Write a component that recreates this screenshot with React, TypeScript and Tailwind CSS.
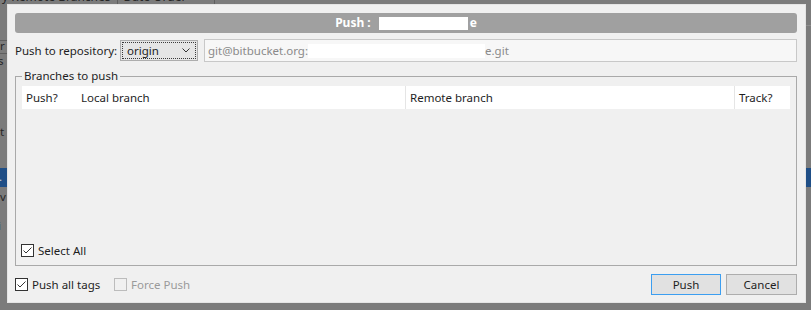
import React from "react";

function Check({ checked, disabled }: { checked?: boolean; disabled?: boolean }) {
  return (
    <div
      className={
        "w-[13px] h-[13px] shrink-0 border flex items-center justify-center " +
        (disabled ? "border-[#bcbcbc] bg-[#f0f0f0]" : "border-[#333333] bg-white")
      }
    >
      {checked && (
        <svg width="11" height="11" viewBox="0 0 11 11">
          <polyline points="1.5,5.5 4,8 9.5,2.5" fill="none" stroke="#333333" strokeWidth="1" />
        </svg>
      )}
    </div>
  );
}

export default function App() {
  return (
    <div className="relative w-[811px] h-[310px] overflow-hidden bg-[#7b7b7b] font-['Noto_Sans','Segoe_UI',sans-serif] text-[11.5px] text-[#1e1e1e]">
      {/* dimmed application behind the dialog */}
      <div className="absolute left-0 top-[-10px] flex items-center h-[14px] text-[#262626] leading-[14px] text-[12px]">
        <span className="pl-[2px] pr-[6px] whitespace-nowrap">y Remote Branches</span>
        <span className="w-[1px] h-[14px] bg-[#5e5e5e]" />
        <span className="pl-[6px] whitespace-nowrap">Date Order</span>
        <svg width="12" height="8" viewBox="0 0 12 8" className="ml-[8px]">
          <polyline points="2,1 6,5 10,1" fill="none" stroke="#262626" strokeWidth="1" />
        </svg>
        <span className="ml-[8px] w-[1px] h-[14px] bg-[#5e5e5e]" />
      </div>
      <div className="absolute left-0 top-[40px] w-[7px] h-[1px] bg-[#5e5e5e]" />
      <div className="absolute left-0 top-[40px] text-[#262626] leading-[12px]">r</div>
      <div className="absolute left-0 top-[53px] w-[7px] h-[1px] bg-[#5e5e5e]" />
      <div className="absolute left-[-2px] top-[55px] text-[#262626] leading-[12px]">s</div>
      <div className="absolute left-0 top-[126px] text-[#262626] leading-[12px]">t</div>
      <div className="absolute left-0 top-[168px] w-[811px] h-[19px] bg-[#1f4e86]" />
      <div className="absolute left-[-1px] top-[171px] text-[#d0d0d0] leading-[12px]">.</div>
      <div className="absolute left-0 top-[191px] text-[#262626] leading-[12px]">v</div>
      <div className="absolute left-[-2px] top-[220px] text-[#262626] leading-[12px]">i</div>
      <div className="absolute right-0 top-[25px] w-[5px] h-[1px] bg-[#8e8e8e]" />

      {/* dialog */}
      <div className="absolute left-[7px] top-[4px] w-[799px] h-[299px] bg-[#f0f0f0] border border-[#e4e4e4] flex flex-col pl-[7px] pr-[8px] pt-[8px] pb-[8px]">
        {/* title */}
        <div className="h-[20px] shrink-0 rounded-[3px] bg-[#a0a0a0] flex items-center justify-center text-white font-bold text-[12px]">
          <span>Push :</span>
          <span className="ml-[8px] w-[89px] h-[13px] bg-white" />
          <span className="ml-[2px]">e</span>
        </div>

        {/* repository row */}
        <div className="mt-[6px] shrink-0 flex items-center h-[23px]">
          <div className="w-[105px] whitespace-nowrap">Push to repository:</div>
          <div className="w-[78px] h-[21px] border border-[#adadad] bg-[#e5e5e5] p-[1px]">
            <div className="h-full border border-dotted border-[#3a3a3a] flex items-center pl-[4px] pr-[5px]">
              <span className="flex-1 leading-[14px]">origin</span>
              <svg width="8" height="5" viewBox="0 0 8 5">
                <polyline points="0.5,0.5 4,4 7.5,0.5" fill="none" stroke="#333333" strokeWidth="1" />
              </svg>
            </div>
          </div>
          <div className="ml-[6px] flex-1 h-[23px] border border-[#c8c8c8] bg-[#f7f7f7] flex items-center pl-[3px] text-[#8a8a8a] whitespace-nowrap">
            <span className="shrink-0">git@bitbucket.org:</span>
            <span className="w-[177px] h-[14px] bg-white shrink-0" />
            <span className="shrink-0">e.git</span>
          </div>
        </div>

        {/* branches group */}
        <fieldset className="mt-[6px] shrink-0 border border-[#a9a9a9] px-[6px] pb-[8px]">
          <legend className="px-[2px] leading-[16px]">Branches to push</legend>
          <div className="h-[173px] flex flex-col">
            <div className="mt-[2px] h-[23px] bg-white flex items-center">
              <div className="w-[55px] pl-[4px]">Push?</div>
              <div className="w-[328px] pl-[4px]">Local branch</div>
              <div className="w-[329px] h-full border-l border-[#e5e5e5] pl-[4px] flex items-center">Remote branch</div>
              <div className="flex-1 h-full border-l border-[#e5e5e5] pl-[4px] flex items-center">Track?</div>
            </div>
            <div className="flex-1" />
            <div className="h-[13px] flex items-center gap-[4px] -ml-[1px]">
              <Check checked />
              <span className="leading-[13px]">Select All</span>
            </div>
          </div>
        </fieldset>

        {/* bottom row */}
        <div className="mt-[8px] shrink-0 flex items-center h-[21px]">
          <div className="w-[99px] flex items-center gap-[4px]">
            <Check checked />
            <span className="whitespace-nowrap">Push all tags</span>
          </div>
          <div className="flex items-center gap-[4px] text-[#9a9a9a]">
            <Check disabled />
            <span>Force Push</span>
          </div>
          <div className="ml-auto flex items-center">
            <button className="w-[70px] h-[21px] border border-[#3c9ef0] bg-[#e1e1e1] text-[#1e1e1e] text-[11.5px] leading-none">
              Push
            </button>
            <button className="ml-[5px] w-[71px] h-[21px] border border-[#adadad] bg-[#e1e1e1] text-[#1e1e1e] text-[11.5px] leading-none">
              Cancel
            </button>
          </div>
        </div>
      </div>
    </div>
  );
}
